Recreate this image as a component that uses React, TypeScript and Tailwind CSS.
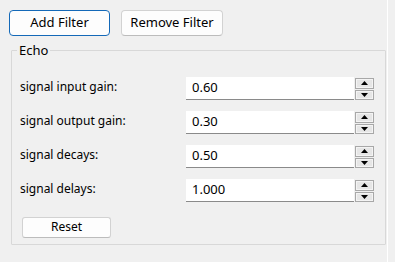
import React from "react";

const font = { fontFamily: '"Segoe UI", "Noto Sans", sans-serif' };

function Spin() {
  return (
    <div className="flex flex-col gap-[1px] w-[19px] h-[22px] ml-[1px] mt-[1px]">
      <div className="flex-1 border border-[#a8a8a8] bg-[#e6e6e6] shadow-[inset_0_0_0_1px_#f4f4f4] flex items-center justify-center">
        <svg width="7" height="4" viewBox="0 0 7 4"><path d="M0 4 L3.5 0 L7 4 Z" fill="#000" /></svg>
      </div>
      <div className="flex-1 border border-[#a8a8a8] bg-[#e6e6e6] shadow-[inset_0_0_0_1px_#f4f4f4] flex items-center justify-center">
        <svg width="7" height="4" viewBox="0 0 7 4"><path d="M0 0 L7 0 L3.5 4 Z" fill="#000" /></svg>
      </div>
    </div>
  );
}

function Row({ label, value }: { label: string; value: string }) {
  return (
    <div className="flex items-center h-[23px]">
      <div className="w-[174px] pl-[8px] pb-[3px] text-[12px] text-black">{label}</div>
      <div className="flex items-start h-[23px]">
        <div className="w-[168px] h-[23px] bg-white border-b border-[#8a8a8a] flex items-center pl-[6px] text-[13px] text-black">
          {value}
        </div>
        <Spin />
      </div>
    </div>
  );
}

export default function App() {
  return (
    <div className="w-[395px] h-[262px] bg-[#f0f0f0] relative overflow-hidden" style={font}>
      <div className="absolute top-0 bottom-0 left-[387px] w-[1px] bg-white" />
      <div className="flex gap-[11px] pt-[10px] pl-[9px]">
        <button className="w-[101px] h-[26px] rounded-[4px] border border-[#1469b8] bg-[#fdfdfd] text-[13px] text-black">
          Add Filter
        </button>
        <button className="w-[102px] h-[26px] rounded-[4px] border border-[#d2d2d2] border-b-[#bcbcbc] bg-[#fdfdfd] text-[13px] text-black">
          Remove Filter
        </button>
      </div>
      <fieldset className="ml-[11px] mt-[7px] w-[375px] h-[202px] border border-[#d8d8d8] rounded-[1px]">
        <legend className="ml-[5px] px-[2px] text-[13px] text-black leading-[15px]">Echo</legend>
        <div className="flex flex-col gap-[11px] pt-[19px]">
          <Row label="signal input gain:" value="0.60" />
          <Row label="signal output gain:" value="0.30" />
          <Row label="signal decays:" value="0.50" />
          <Row label="signal delays:" value="1.000" />
        </div>
        <div className="pl-[10px] pt-[11px]">
          <button className="w-[89px] h-[21px] rounded-[3px] border border-[#d2d2d2] border-b-[#bcbcbc] bg-[#fdfdfd] text-[12px] text-black">
            Reset
          </button>
        </div>
      </fieldset>
    </div>
  );
}
